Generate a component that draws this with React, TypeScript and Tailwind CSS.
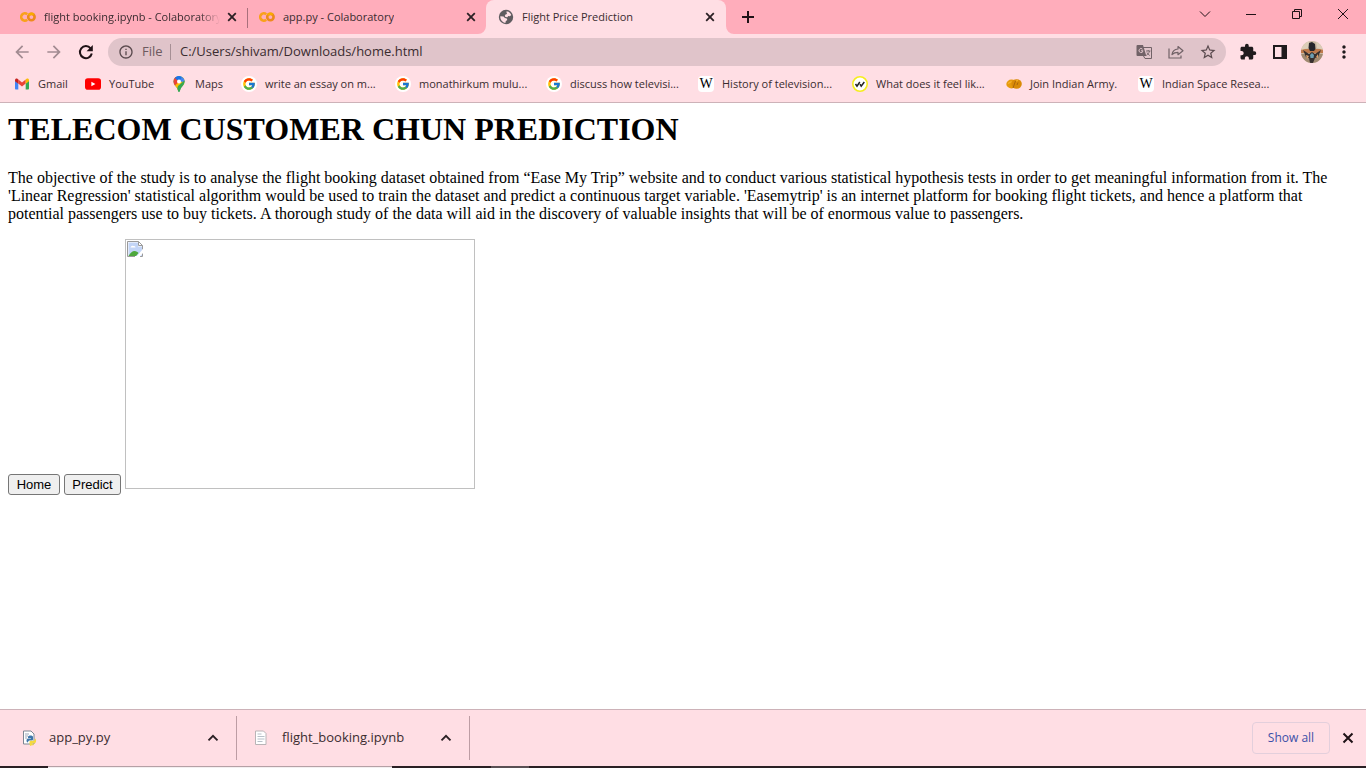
import type { ReactNode } from 'react';
import {
  MdArrowBack,
  MdArrowForward,
  MdExtension,
  MdInfoOutline,
  MdMoreVert,
  MdStarBorder,
} from 'react-icons/md';
import { FcGoogle } from 'react-icons/fc';

function ColabIcon() {
  return (
    <svg viewBox="0 0 16 16" className="size-4 shrink-0" fill="none" strokeWidth="2.6">
      <circle cx="11.4" cy="8" r="3.2" stroke="#ee8a1c" />
      <path d="M7.2 5.3a3.6 3.6 0 1 0 0 5.4" stroke="#f9a11a" />
      <path d="M8.8 6.2A3.2 3.2 0 0 1 13.6 5.7" stroke="#f9ab00" />
    </svg>
  );
}

function GlobeIcon() {
  return (
    <svg viewBox="0 0 16 16" className="size-4 shrink-0">
      <circle cx="8" cy="8" r="7.2" fill="#5f5c60" />
      <path
        d="M8.300 2.600c2.500-.2 4.300 1.400 5 3.400l-1.500 1.300-1.600-.2-.8 1.200-2-.2-.6-1.400.7-1.300 1.500-.4Z"
        fill="#ffdee4"
      />
      <path
        d="M2.300 7.200l3.200.4 1.400 1.500 1.900.5.5 1.400-1.600 1.300-.1 1.500c-3.200-.1-5.500-3.200-5.300-6.600Z"
        fill="#ffdee4"
      />
    </svg>
  );
}

function CloseIcon() {
  return (
    <svg viewBox="0 0 16 16" className="size-4" stroke="#2b2024" strokeWidth="1.8">
      <path d="M4.200 4.200l7.600 7.600M11.800 4.200l-7.600 7.600" />
    </svg>
  );
}

function GmailIcon() {
  return (
    <svg viewBox="0 0 16 16" className="size-4">
      <path d="M1 4.500V12.500c0 .5.400 1 1 1h2.300V7.500Z" fill="#4285f4" />
      <path d="M15 4.500V12.500c0 .5-.4 1-1 1h-2.300V7.500Z" fill="#34a853" />
      <path d="M4.300 3.600 8 6.400l3.700-2.800v4L8 10.400 4.300 7.600Z" fill="#ea4335" />
      <path d="M1 5.200v-1C1 2.700 2.600 2.200 3.700 3l.6.500v4.200Z" fill="#c5221f" />
      <path d="M15 5.200v-1c0-1.500-1.600-2-2.700-1.200l-.6.500v4.200Z" fill="#fbbc04" />
    </svg>
  );
}

function YouTubeIcon() {
  return (
    <svg viewBox="0 0 16 16" className="size-4">
      <rect x="0" y="2.300" width="16" height="11.400" rx="2.800" fill="#f00" />
      <path d="M6.400 5.700v4.600l4-2.300Z" fill="#fff" />
    </svg>
  );
}

function MapsIcon() {
  return (
    <svg viewBox="0 0 16 16" className="size-4">
      <defs>
        <clipPath id="pin">
          <path d="M8 0a5.500 5.500 0 0 0-5.500 5.500c0 3.200 2.300 4.500 3.700 6.800C7 13.700 7.100 16 8 16s1-2.300 1.800-3.700c1.400-2.300 3.700-3.600 3.700-6.800A5.500 5.500 0 0 0 8 0Z" />
        </clipPath>
      </defs>
      <g clipPath="url(#pin)">
        <path d="M0 0h16v16H0Z" fill="#34a853" />
        <path d="M0 12 16-3v9L5 16Z" fill="#fbbc04" />
        <path d="M8 5.500 13-1h-9v7Z" fill="#4285f4" />
        <path d="M0 0h4.200L8 5.500 3 10.500 0 8Z" fill="#ea4335" />
        <path d="M3.800 2 8 5.500 11 2 8-1Z" fill="#1a73e8" />
        <path d="M8 5.500 11 1.200 16 2v4Z" fill="#4285f4" />
        <path d="M7 10 14 4v4l-5 8H5Z" fill="#34a853" />
      </g>
      <circle cx="8" cy="5.500" r="2" fill="#fff" />
    </svg>
  );
}

function GoogleIcon() {
  return (
    <span className="flex size-4 items-center justify-center rounded-full bg-white">
      <FcGoogle className="size-3.5" />
    </span>
  );
}

function WikiIcon() {
  return (
    <span
      aria-hidden="true"
      className="flex size-4 items-center justify-center rounded bg-white font-['Liberation_Serif',serif] text-sm leading-4 text-black"
    >
      W
    </span>
  );
}

function TicksIcon() {
  return (
    <svg viewBox="0 0 16 16" className="size-4" fill="none">
      <circle cx="8" cy="8" r="7.200" fill="#fff" stroke="#f5ee1e" strokeWidth="1.600" />
      <path d="M3.500 8l1.500 2.200L7.800 6M8 8.200l1.200 2L12.300 6" stroke="#222" strokeWidth="1.500" />
    </svg>
  );
}

function ArmyIcon() {
  return (
    <svg viewBox="0 0 16 16" className="size-4">
      <ellipse cx="5.500" cy="8" rx="5.200" ry="4.400" fill="#e69a0c" />
      <ellipse cx="10.600" cy="8" rx="5.200" ry="4.800" fill="#d98a05" />
      <path d="M7 12 9.500 5M11 9l1-2.500" stroke="#a8650a" strokeWidth="1" />
      <path d="M2 7.500l3.500-2M10 5l2-.5" stroke="#f7b52e" strokeWidth="1.200" />
    </svg>
  );
}

function ReloadIcon() {
  return (
    <svg viewBox="0 0 20 20" className="size-5">
      <path d="M14.600 6.300A6 6 0 1 0 15.800 11.500" fill="none" stroke="#1f1216" strokeWidth="2" />
      <path d="M16.800 3v6.200h-6.200Z" fill="#1f1216" />
    </svg>
  );
}

function TranslateIcon() {
  return (
    <svg viewBox="0 0 16 16" className="size-4" fill="none" stroke="#716267">
      <path d="M7 3.500h8.500v11H9L7.500 12" />
      <path d="M10 7h4.500M12.200 6v1M13.500 7c-.4 2-1.600 3.400-3.200 4.400M11 8.500c.5 1.300 1.500 2.300 2.800 3" strokeWidth=".9" />
      <path d="M1.500 1h5.500l3.300 11H1.500a1 1 0 0 1-1-1V2a1 1 0 0 1 1-1Z" fill="#716267" stroke="none" />
      <path d="M6.500 5.200a2 2 0 1 0 .5 1.600H5" stroke="#e0c4ca" />
    </svg>
  );
}

function Avatar() {
  return (
    <svg viewBox="0 0 22 22" className="size-[22px]">
      <defs>
        <clipPath id="avatar">
          <circle cx="11" cy="11" r="11" />
        </clipPath>
      </defs>
      <g clipPath="url(#avatar)">
        <path d="M0 0h22v22H0Z" fill="#c9b8a0" />
        <path d="M0 8h22v4H0Z" fill="#bf7a4c" />
        <path d="M0 13h22v9H0Z" fill="#a08a72" />
        <path d="M0 0h8v7l-8 2ZM15 0h7v9l-6-2Z" fill="#dccdb8" />
        <path d="M8 2l3-1 3 2 .5 5-1.500 2H9L7.500 7Z" fill="#26262a" />
        <path d="M2 9l6 4 3-2 3 2 6-4-3 7-3 1-2 5H9l-1-5-3-1Z" fill="#38302e" />
        <path d="M9 14l2-2 2 2-.5 3h-3Z" fill="#6c9fb4" />
        <path d="M5 14l3 1-2 3ZM17 13l-2 3 2 1Z" fill="#e2a26a" />
      </g>
    </svg>
  );
}

type TabProps = { title: string; icon: ReactNode; active?: boolean; divider?: boolean };

function Tab({ title, icon, active, divider }: TabProps) {
  return (
    <div
      className={
        active
          ? 'relative flex h-full w-60 items-center rounded-t-lg bg-[#ffdee4] pr-2 pl-3'
          : 'relative flex h-full w-[239px] items-center pr-[7px] pl-3'
      }
    >
      <button role="tab" aria-selected={!!active} className="flex min-w-0 flex-1 items-center gap-2 text-left">
        {icon}
        <span
          className={
            divider
              ? 'w-44 overflow-hidden mask-r-from-88% whitespace-nowrap'
              : 'overflow-hidden whitespace-nowrap'
          }
        >
          {title}
        </span>
      </button>
      <button aria-label={`Close ${title}`} className="ml-1">
        <CloseIcon />
      </button>
      {divider && <span className="absolute top-2 -right-px h-5 w-px bg-[#a8707c]" />}
      {active && (
        <>
          <svg viewBox="0 0 8 8" className="absolute bottom-0 -left-2 size-2" fill="#ffdee4">
            <path d="M8 0v8H0a8 8 0 0 0 8-8Z" />
          </svg>
          <svg viewBox="0 0 8 8" className="absolute -right-2 bottom-0 size-2" fill="#ffdee4">
            <path d="M0 0v8h8a8 8 0 0 1-8-8Z" />
          </svg>
        </>
      )}
    </div>
  );
}

const bookmarks: { label: string; icon: ReactNode; width: string }[] = [
  { label: 'Gmail', icon: <GmailIcon />, width: 'w-[71px]' },
  { label: 'YouTube', icon: <YouTubeIcon />, width: 'w-[86px]' },
  { label: 'Maps', icon: <MapsIcon />, width: 'w-[70px]' },
  { label: 'write an essay on m...', icon: <GoogleIcon />, width: 'w-[154px]' },
  { label: 'monathirkum mulu...', icon: <GoogleIcon />, width: 'w-[151px]' },
  { label: 'discuss how televisi...', icon: <GoogleIcon />, width: 'w-[152px]' },
  { label: 'History of television...', icon: <WikiIcon />, width: 'w-[154px]' },
  { label: 'What does it feel lik...', icon: <TicksIcon />, width: 'w-[154px]' },
  { label: 'Join Indian Army.', icon: <ArmyIcon />, width: 'w-[132px]' },
  { label: 'Indian Space Resea...', icon: <WikiIcon />, width: 'w-[150px]' },
];

function WindowButton({ label, children }: { label: string; children: ReactNode }) {
  return (
    <button aria-label={label} className="flex h-7 w-[46px] items-center justify-center">
      <svg viewBox="0 0 12 12" className="size-3" fill="none" stroke="#1f1216" strokeWidth="1">
        {children}
      </svg>
    </button>
  );
}

function ToolButton({ label, children }: { label: string; children: ReactNode }) {
  return (
    <button aria-label={label} className="flex h-7 w-8 shrink-0 items-center justify-center">
      {children}
    </button>
  );
}

function DownloadItem({ name, icon, width }: { name: string; icon: ReactNode; width: string }) {
  return (
    <div className={`flex h-11 items-center border-r border-[#bd9da4] ${width}`}>
      <button className="flex flex-1 items-center gap-3 text-left">
        {icon}
        <span>{name}</span>
      </button>
      <button aria-label={`Options for ${name}`} className="mr-[15px]">
        <svg viewBox="0 0 16 16" className="size-4" fill="none" stroke="#2b2024" strokeWidth="1.900">
          <path d="M3.500 10.300 8 5.800l4.500 4.500" />
        </svg>
      </button>
    </div>
  );
}

export default function App() {
  return (
    <div className="flex h-screen flex-col bg-white font-['Open_Sans','Noto_Sans',sans-serif] text-[#3a2c30]">
      <header className="shrink-0">
        <div className="flex h-[34px] items-center bg-[#ffadbb] pl-2 text-[11px]">
          <div role="tablist" className="flex h-full">
            <Tab title="flight booking.ipynb - Colaboratory" icon={<ColabIcon />} divider />
            <Tab title="app.py - Colaboratory" icon={<ColabIcon />} />
            <Tab title="Flight Price Prediction" icon={<GlobeIcon />} active />
          </div>
          <button aria-label="New tab" className="ml-3.5">
            <svg viewBox="0 0 16 16" className="size-4" stroke="#1f1216" strokeWidth="2">
              <path d="M8 2v12M2 8h12" />
            </svg>
          </button>
          <div className="ml-auto flex h-full">
            <WindowButton label="Search tabs">
              <path d="M1 3.500 6 8.500l5-5" />
            </WindowButton>
            <WindowButton label="Minimize">
              <path d="M1 6.500h10" />
            </WindowButton>
            <WindowButton label="Restore">
              <path d="M1.500 3.500h7v7h-7ZM3.500 3.500v-2h7v7h-2" />
            </WindowButton>
            <WindowButton label="Close window">
              <path d="M1 1l10 10M11 1 1 11" />
            </WindowButton>
          </div>
        </div>

        <div className="flex h-9 items-center bg-[#ffdee4] px-1.5">
          <ToolButton label="Back">
            <MdArrowBack className="size-5 text-[#a28b91]" />
          </ToolButton>
          <ToolButton label="Forward">
            <MdArrowForward className="size-5 text-[#a28b91]" />
          </ToolButton>
          <ToolButton label="Reload">
            <ReloadIcon />
          </ToolButton>
          <div className="mx-1.5 flex h-7 min-w-0 flex-1 items-center rounded-full bg-[#e0c4ca] pr-0.5 pl-2.5 text-[13px]">
            <MdInfoOutline className="size-4 shrink-0 text-[#5a4a4e]" />
            <label htmlFor="address" className="ml-2 w-7 text-[#6d5a5f]">
              File
            </label>
            <span className="h-4 w-px bg-[#a68f95]" />
            <input
              id="address"
              defaultValue="C:/Users/shivam/Downloads/home.html"
              className="ml-[9px] min-w-0 flex-1 bg-transparent outline-none"
            />
            <ToolButton label="Translate this page">
              <TranslateIcon />
            </ToolButton>
            <ToolButton label="Share this page">
              <svg viewBox="0 0 16 16" className="size-4" fill="none" stroke="#716267" strokeWidth="1.200">
                <path d="M1 4.500v9.500h12v-2.500" />
                <path d="M4 10.500c.5-3.500 2.500-5.200 6-5.500V2.500l5 4.200-5 4V8.300c-2.600 0-4.500.7-6 2.200Z" strokeLinejoin="round" />
              </svg>
            </ToolButton>
            <ToolButton label="Bookmark this page">
              <MdStarBorder className="size-[18px] text-[#5a4a4e]" />
            </ToolButton>
          </div>
          <ToolButton label="Extensions">
            <MdExtension className="size-[18px] text-[#1f1a1c]" />
          </ToolButton>
          <ToolButton label="Side panel">
            <svg viewBox="0 0 14 14" className="size-3.5">
              <path d="M0 0h14v14H0ZM2 2v10h6.500V2Z" fill="#1f1a1c" fillRule="evenodd" />
            </svg>
          </ToolButton>
          <ToolButton label="Profile">
            <Avatar />
          </ToolButton>
          <ToolButton label="Menu">
            <MdMoreVert className="size-5 text-[#1f1a1c]" />
          </ToolButton>
        </div>

        <nav
          aria-label="Bookmarks"
          className="flex h-[33px] items-center overflow-hidden border-b border-[#cdb2b8] bg-[#ffdee4] pb-1 pl-3.5 text-[11px]"
        >
          {bookmarks.map((b) => (
            <a key={b.label} href="#" className={`flex shrink-0 items-center gap-2 whitespace-nowrap ${b.width}`}>
              {b.icon}
              <span>{b.label}</span>
            </a>
          ))}
        </nav>
      </header>

      <main className="flex-1 overflow-auto bg-white px-2 pt-2 font-['Liberation_Serif',serif] text-black">
        <h1 className="text-[32px] leading-9 font-bold">TELECOM CUSTOMER CHUN PREDICTION</h1>
        <p className="mt-[22px] text-base leading-[18px]">
          The objective of the study is to analyse the flight booking dataset obtained from “Ease My Trip” website and to
          conduct various statistical hypothesis tests in order to get meaningful information from it. The 'Linear
          Regression' statistical algorithm would be used to train the dataset and predict a continuous target variable.
          'Easemytrip' is an internet platform for booking flight tickets, and hence a platform that potential passengers
          use to buy tickets. A thorough study of the data will aid in the discovery of valuable insights that will be of
          enormous value to passengers.
        </p>
        <div className="mt-4 flex items-baseline gap-1 font-['Liberation_Sans',sans-serif] text-[13px] leading-[15px]">
          <button className="h-[21px] w-[52px] rounded-[3px] border border-[#767676] bg-[#efefef]">Home</button>
          <button className="h-[21px] w-[57px] rounded-[3px] border border-[#767676] bg-[#efefef]">Predict</button>
          <svg
            role="img"
            aria-label="Missing picture"
            className="h-[250px] w-[350px] border border-[#c0c0c0]"
            fill="none"
          >
            <path d="M1.500 1.500h11l4 4v11h-15Z" fill="#fff" />
            <path d="M2.500 2.500h9.500v4h4v9.500H2.500Z" fill="#c3d5f7" />
            <path d="M4.500 7.500a2 2 0 0 1 3-1.500 1.500 1.500 0 0 1 2 1.500Z" fill="#fff" />
            <path d="M2.500 16c2-3.500 4-5 6-5s3 1 4 2L10 16Z" fill="#4ea83c" />
            <path d="M1.500 16.500v-15h11l4 4v4M12.500 1.500v4h4M1.500 16.500H9M14 16.500h2.500V13" stroke="#9a9a9a" />
            <path d="M9.500 17.500 17.500 8.500v4L13 17.500Z" fill="#fff" />
          </svg>
        </div>
      </main>

      <footer className="shrink-0">
        <div className="flex h-[57px] items-center border-t border-[#cdb2b8] bg-[#ffdee4] pr-2.5 text-[13px]">
          <DownloadItem
            name="app_py.py"
            width="w-[237px] pl-[21px]"
            icon={
              <svg viewBox="0 0 16 16" className="size-4">
                <path d="M2.500 1h7.500l3 3v10H2.500Z" fill="#fff" stroke="#7d8794" />
                <path d="M4 4h4M4 6h3M4 8h2" stroke="#9aa7b8" />
                <path d="M7 7c0-2 5-2 5 0v2.500c0 1-1 1-2 1H8.500c-1 0-1.500 1-1.500 2-2 0-2-4 0-4h3V8H7Z" fill="#3f77ab" />
                <path d="M14 8.500c2 1 1 5-.5 5h-2.500v.7h2c0 1.600-4.500 1.600-4.500 0V12c0-1 .7-1.200 1.500-1.200h2c1.200 0 2-.8 2-2.300Z" fill="#f5d93f" />
              </svg>
            }
          />
          <DownloadItem
            name="flight_booking.ipynb"
            width="w-[233px] pl-[17px]"
            icon={
              <svg viewBox="0 0 16 16" className="size-4">
                <path d="M1.500 1h8l2.500 2.500v11H1.500Z" fill="#fff" stroke="#b9b4b6" />
                <path d="M3.500 4h4M3.500 6.500h7M3.500 9h7M3.500 11.500h5" stroke="#b7c0c8" />
              </svg>
            }
          />
          <button className="ml-auto h-8 w-[78px] rounded border border-[#e3cfdc] text-xs font-medium text-[#3c50a8]">
            Show all
          </button>
          <button aria-label="Close downloads bar" className="ml-2.5">
            <svg viewBox="0 0 16 16" className="size-4" stroke="#1f1216" strokeWidth="2">
              <path d="M3.500 3.500l9 9M12.500 3.500l-9 9" />
            </svg>
          </button>
        </div>
        <div className="flex h-0.5 bg-[#2a2024]">
          <span className="ml-12 w-[344px] border-t border-[#b5a0a5] bg-[#f3eff0]" />
          <span className="ml-[99px] w-[38px] bg-[#5a5054]" />
        </div>
      </footer>
    </div>
  );
}
